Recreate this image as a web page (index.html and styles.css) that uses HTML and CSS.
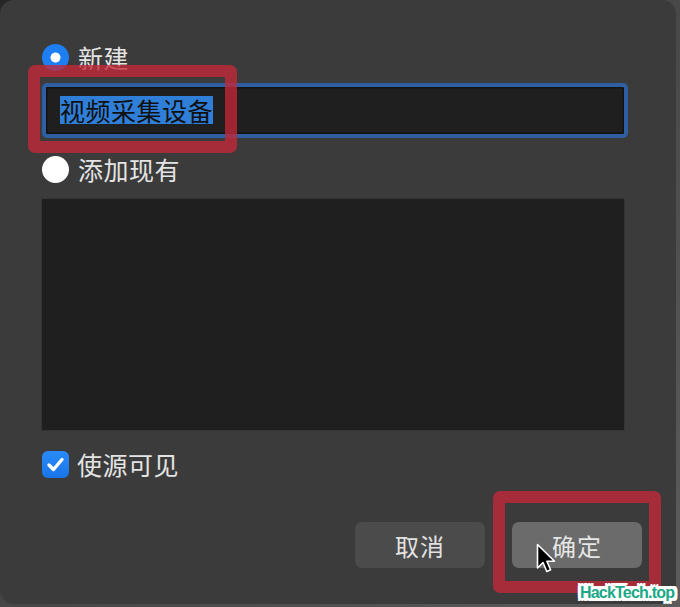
FILE: index.html
```html
<!DOCTYPE html>
<html lang="zh">
<head>
<meta charset="utf-8">
<title>添加源</title>
<link rel="stylesheet" href="styles.css">
</head>
<body>
<div class="window">
  <div class="option-row">
    <span class="radio radio-on"></span>
    <span class="label">新建</span>
  </div>
  <div class="text-input">
    <span class="selected-text">视频采集设备</span>
  </div>
  <div class="option-row row-existing">
    <span class="radio radio-off"></span>
    <span class="label">添加现有</span>
  </div>
  <div class="list-box"></div>
  <div class="option-row row-check">
    <span class="checkbox">
      <svg viewBox="0 0 27 27" width="27" height="27"><path d="M7 14 L11.5 18.5 L20 8.5" fill="none" stroke="#fff" stroke-width="3.4" stroke-linecap="round" stroke-linejoin="round"/></svg>
    </span>
    <span class="label">使源可见</span>
  </div>
  <div class="button-row">
    <button class="btn btn-cancel">取消</button>
    <button class="btn btn-ok">确定</button>
  </div>

  <div class="mark mark-name"></div>
  <div class="mark mark-ok"></div>
  <svg class="cursor" viewBox="0 0 20 32" width="20" height="32">
    <path d="M1.5 1.5 L1.5 25 L7 19.5 L10.8 28.5 L14.6 26.8 L10.9 18.2 L18.5 18.2 Z" fill="#000" stroke="#fff" stroke-width="1.6" stroke-linejoin="round"/>
  </svg>
  <div class="watermark">HackTech.top</div>
</div>
</body>
</html>
```

FILE: styles.css
```css
html, body {
  margin: 0;
  padding: 0;
}
body {
  width: 680px;
  height: 607px;
  overflow: hidden;
  background: linear-gradient(135deg, #262626 0%, #3a3a3a 20%, #5c5c5c 100%);
  font-family: "Noto Sans CJK SC", "Noto Sans", sans-serif;
}
.window {
  position: relative;
  box-sizing: border-box;
  width: 676px;
  height: 604px;
  background: #3b3b3b;
  border-radius: 14px;
  padding: 42px 34px 0 42px;
  display: flex;
  flex-direction: column;
  align-items: flex-start;
}
.option-row {
  height: 30px;
  display: flex;
  align-items: center;
  gap: 9px;
}
.label {
  font-size: 25px;
  line-height: 30px;
  color: #e4e4e4;
  letter-spacing: 0.5px;
}
.radio {
  box-sizing: border-box;
  width: 27px;
  height: 27px;
  border-radius: 50%;
  flex: none;
}
.radio-on {
  background: radial-gradient(circle, #ffffff 0 4.6px, #1d7ff3 5.4px);
}
.radio-off {
  background: #ffffff;
}
.text-input {
  box-sizing: border-box;
  margin-top: 11px;
  width: 586px;
  height: 55px;
  border: 4px solid #2f5fa0;
  border-radius: 5px;
  background: #1f1f1f;
  box-shadow: inset 0 0 0 1.5px #121212;
  display: flex;
  align-items: center;
  padding-left: 14px;
}
.selected-text {
  background: #2f7fd8;
  color: #101010;
  font-size: 25px;
  line-height: 28px;
  letter-spacing: 0.5px;
  margin-top: -2px;
}
.row-existing {
  margin-top: 16px;
}
.list-box {
  margin-top: 15px;
  width: 582px;
  height: 231px;
  background: #1f1f1f;
  box-shadow: 0 0 0 1px #353535;
}
.row-check {
  margin-top: 19px;
  gap: 8px;
}
.checkbox {
  width: 27px;
  height: 27px;
  border-radius: 6px;
  background: linear-gradient(#2a8bf8, #1a74e8);
  display: flex;
  flex: none;
}
.button-row {
  margin-top: 43px;
  align-self: flex-end;
  display: flex;
  gap: 27px;
}
.btn {
  width: 130px;
  height: 46px;
  border: none;
  border-radius: 7px;
  font-family: "Noto Sans CJK SC", "Noto Sans", sans-serif;
  font-size: 24px;
  letter-spacing: 1px;
  padding: 0;
}
.btn-cancel {
  background: #4b4b4b;
  color: #e2e2e2;
}
.btn-ok {
  background: #6b6b6b;
  color: #e6e6e6;
}
.mark {
  position: absolute;
  box-sizing: border-box;
  border: 12px solid rgba(196, 40, 58, 0.78);
  border-radius: 7px;
}
.mark-name {
  left: 28px;
  top: 65px;
  width: 209px;
  height: 88px;
}
.mark-ok {
  left: 493px;
  top: 491px;
  width: 168px;
  height: 102px;
}
.cursor {
  position: absolute;
  left: 536px;
  top: 543px;
}
.watermark {
  position: absolute;
  left: 580px;
  top: 582px;
  font-family: "Liberation Sans", Arial, sans-serif;
  font-weight: bold;
  font-size: 16px;
  line-height: 22px;
  color: #1ba886;
  letter-spacing: -0.8px;
  text-shadow:
    2px 0 0 #fff, -2px 0 0 #fff, 0 2px 0 #fff, 0 -2px 0 #fff,
    2px 2px 0 #fff, -2px -2px 0 #fff, 2px -2px 0 #fff, -2px 2px 0 #fff,
    3px 0 0 #fff, -3px 0 0 #fff, 0 3px 0 #fff, 0 -3px 0 #fff,
    3px 3px 0 #fff, -3px -3px 0 #fff, 3px -3px 0 #fff, -3px 3px 0 #fff;
}
```
